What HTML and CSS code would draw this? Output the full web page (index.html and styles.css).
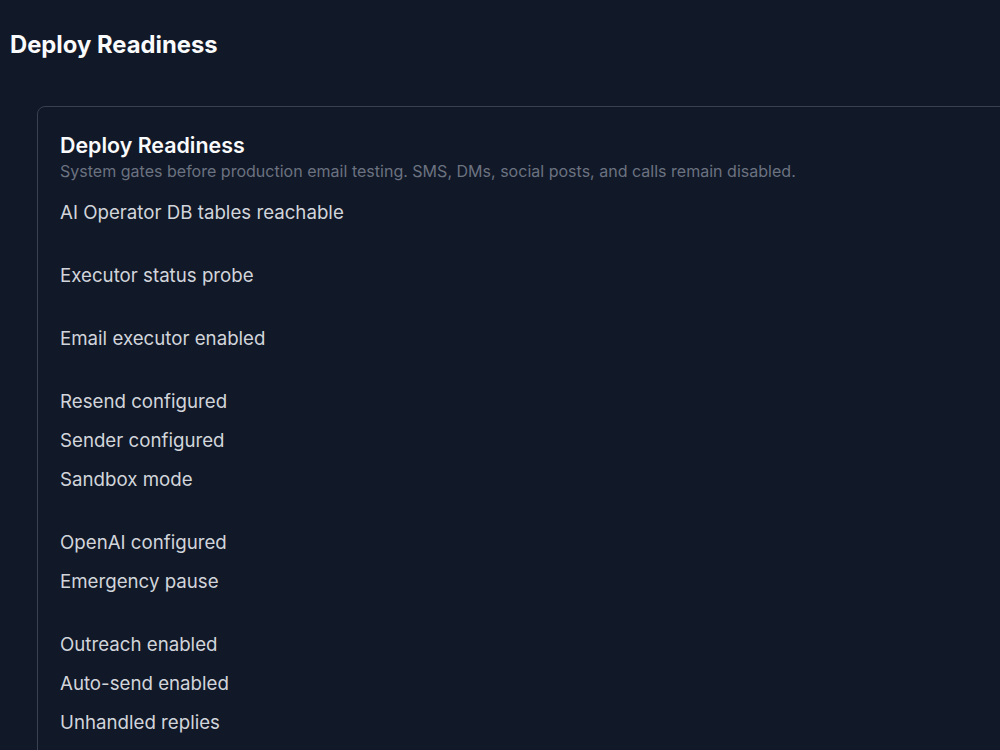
FILE: index.html
```html
<!DOCTYPE html>
<html lang="en">
<head>
<meta charset="utf-8">
<title>Deploy Readiness</title>
<link rel="stylesheet" href="styles.css">
</head>
<body>
<main class="page">
  <h1 class="page-title">Deploy Readiness</h1>
  <section class="card">
    <header class="card-head">
      <h2 class="card-title">Deploy Readiness</h2>
      <p class="card-sub">System gates before production email testing. SMS, DMs, social posts, and calls remain disabled.</p>
    </header>
    <ul class="checks">
      <li class="check tall">AI Operator DB tables reachable</li>
      <li class="check tall">Executor status probe</li>
      <li class="check tall">Email executor enabled</li>
      <li class="check">Resend configured</li>
      <li class="check">Sender configured</li>
      <li class="check tall">Sandbox mode</li>
      <li class="check">OpenAI configured</li>
      <li class="check tall">Emergency pause</li>
      <li class="check">Outreach enabled</li>
      <li class="check">Auto-send enabled</li>
      <li class="check">Unhandled replies</li>
    </ul>
  </section>
</main>
</body>
</html>
```

FILE: styles.css
```css
* { box-sizing: border-box; }
html, body {
  margin: 0;
  padding: 0;
  background: #111827;
  overflow: hidden;
}
body {
  font-family: Inter, "Noto Sans", sans-serif;
  color: #d1d5db;
}
.page {
  padding: 29px 0 0 10px;
  width: 1200px;
}
.page-title {
  margin: 0;
  font-size: 23.8px;
  font-weight: 700;
  line-height: 32px;
  color: #f9fafb;
}
.card {
  margin: 45px 0 0 27px;
  border: 1px solid #374151;
  border-radius: 8px;
  padding: 24px 22px 24px 22px;
  width: 1100px;
}
.card-head {
  display: flex;
  flex-direction: column;
}
.card-title {
  margin: 0;
  font-size: 21.4px;
  font-weight: 600;
  line-height: 28px;
  color: #f9fafb;
}
.card-sub {
  margin: 0;
  font-size: 16.05px;
  line-height: 24px;
  color: #6b7280;
}
.checks {
  list-style: none;
  margin: 16px 0 0;
  padding: 0;
  display: flex;
  flex-direction: column;
  gap: 11px;
}
.check {
  font-size: 18.7px;
  line-height: 28px;
  min-height: 28px;
}
.check.tall {
  min-height: 52px;
}
```
